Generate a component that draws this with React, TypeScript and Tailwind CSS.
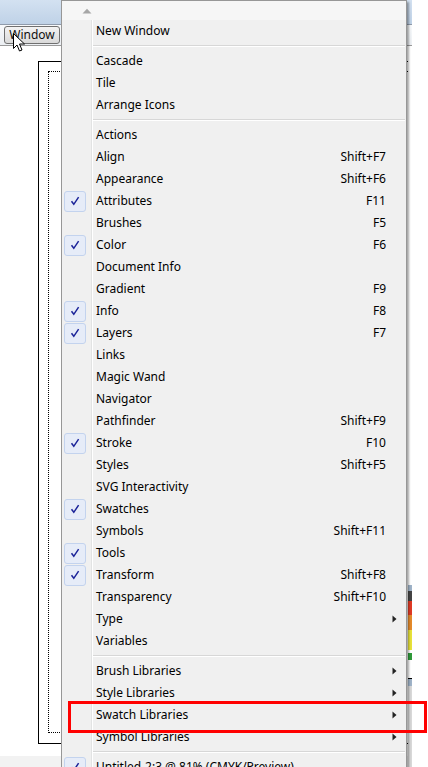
import React from "react";

type Item =
  | { sep: true }
  | { label: string; key?: string; checked?: boolean; sub?: boolean; sep?: false };

const items: Item[] = [
  { label: "New Window" },
  { sep: true },
  { label: "Cascade" },
  { label: "Tile" },
  { label: "Arrange Icons" },
  { sep: true },
  { label: "Actions" },
  { label: "Align", key: "Shift+F7" },
  { label: "Appearance", key: "Shift+F6" },
  { label: "Attributes", key: "F11", checked: true },
  { label: "Brushes", key: "F5" },
  { label: "Color", key: "F6", checked: true },
  { label: "Document Info" },
  { label: "Gradient", key: "F9" },
  { label: "Info", key: "F8", checked: true },
  { label: "Layers", key: "F7", checked: true },
  { label: "Links" },
  { label: "Magic Wand" },
  { label: "Navigator" },
  { label: "Pathfinder", key: "Shift+F9" },
  { label: "Stroke", key: "F10", checked: true },
  { label: "Styles", key: "Shift+F5" },
  { label: "SVG Interactivity" },
  { label: "Swatches", checked: true },
  { label: "Symbols", key: "Shift+F11" },
  { label: "Tools", checked: true },
  { label: "Transform", key: "Shift+F8", checked: true },
  { label: "Transparency", key: "Shift+F10" },
  { label: "Type", sub: true },
  { label: "Variables" },
  { sep: true },
  { label: "Brush Libraries", sub: true },
  { label: "Style Libraries", sub: true },
  { label: "Swatch Libraries", sub: true },
  { label: "Symbol Libraries", sub: true },
  { sep: true },
  { label: "Untitled-2:3 @ 81% (CMYK/Preview)", checked: true },
];

function Check() {
  return (
    <div className="w-[22px] h-[21px] rounded-[3px] border border-[#c3d3ee] bg-[#e6ecf8] flex items-center justify-center">
      <svg width="10" height="10" viewBox="0 0 10 10">
        <path d="M1.5 5.2 L3.8 8.3 L8.6 1.2" fill="none" stroke="#1c2499" strokeWidth="1.5" />
      </svg>
    </div>
  );
}

function Arrow() {
  return (
    <svg width="5" height="8" viewBox="0 0 5 8">
      <path d="M0.5 0.5 L4.5 4 L0.5 7.5 Z" fill="#222" />
    </svg>
  );
}

function Cursor() {
  return (
    <svg width="13" height="20" viewBox="0 0 13 20" className="absolute left-[13px] top-[33px]">
      <path
        d="M0.5 0.5 L0.5 15.5 L4 12 L6.5 18 L9 17 L6.5 11 L11.5 11 Z"
        fill="#fff"
        stroke="#000"
        strokeWidth="1"
        strokeLinejoin="round"
      />
    </svg>
  );
}

export default function App() {
  return (
    <div className="relative w-[428px] h-[767px] overflow-hidden bg-white font-['Noto_Sans',sans-serif] text-[12px] text-black">
      {/* application behind the menu */}
      <div className="w-[412px] h-full flex flex-col">
        <div className="h-[25px] bg-gradient-to-b from-[#d3e1f1] to-[#bfd2e7] border-b border-[#8f9bab]" />
        <div className="relative h-[21px] bg-gradient-to-b from-[#f7f9fb] to-[#eceff3] border-b border-[#9a9a9a] flex items-center pl-[4px]">
          <div className="h-[18px] w-[56px] rounded-[3px] border border-[#707070] bg-gradient-to-b from-[#f3f3f3] to-[#dadada] flex items-center justify-center leading-none text-[12px] text-[#101010]">
            Window
          </div>
        </div>
        <div className="flex-1 flex">
          <div className="flex-1 flex flex-col bg-white">
            <div className="pl-[38px] pt-[15px]">
              <div className="h-[683px] border border-black border-r-0 pl-[9px] pt-[9px]">
                <div className="h-[662px] border border-dotted border-black border-r-0" />
              </div>
            </div>
            <div className="flex-1 mt-[12px] bg-[#f2f2f2]" />
          </div>
          <div className="w-[4px] flex flex-col">
            <div className="h-[539px] bg-white" />
            <div className="h-[6px] bg-[#9fb3c8]" />
            <div className="h-[10px] bg-[#444]" />
            <div className="h-[14px] bg-[#e03a24]" />
            <div className="h-[15px] bg-[#e58a2a]" />
            <div className="h-[20px] bg-[#e8e23a]" />
            <div className="h-[3px] bg-white" />
            <div className="h-[7px] bg-[#2f9a3a]" />
            <div className="h-[18px] bg-white" />
            <div className="h-[1px] bg-black" />
            <div className="h-[7px] bg-[#9fb3c8]" />
            <div className="flex-1 bg-[#d8d8d8]" />
          </div>
        </div>
      </div>

      <Cursor />

      {/* dropdown menu */}
      <div className="absolute left-[61px] top-0 w-[346px] border border-[#979797] bg-[#f0f0f0] shadow-[2px_2px_2px_rgba(0,0,0,0.35)]">
        <div className="h-[19px] bg-[#f6f6f6] flex items-center pl-[20px]">
          <svg width="10" height="6" viewBox="0 0 10 6">
            <path d="M0.5 5.5 L5 0.8 L9.5 5.5 Z" fill="#a6a6a6" />
          </svg>
        </div>
        {items.map((it, i) =>
          it.sep ? (
            <div key={i} className="h-[8px] flex">
              <div className="w-[30px] shrink-0 border-r border-[#e2e3e3] relative">
                <div className="absolute right-[-2px] top-0 bottom-0 w-px bg-white" />
              </div>
              <div className="flex-1 pt-[3px] pl-[1px] pr-[1px]">
                <div className="border-t border-[#d7d7d7] border-b border-b-white" />
              </div>
            </div>
          ) : (
            <div key={i} className="h-[22px] flex items-center">
              <div className="w-[30px] h-full shrink-0 border-r border-[#e2e3e3] relative flex items-center pl-[2px]">
                <div className="absolute right-[-2px] top-0 bottom-0 w-px bg-white" />
                {it.checked ? <Check /> : null}
              </div>
              <div className="flex-1 pl-[4px] whitespace-nowrap leading-none">{it.label}</div>
              <div className="whitespace-nowrap leading-none">{it.key ?? ""}</div>
              <div className="w-[20px] shrink-0 flex items-center pl-[6px]">
                {it.sub ? <Arrow /> : null}
              </div>
            </div>
          )
        )}
      </div>

      {/* annotation */}
      <div className="absolute left-[68px] top-[701px] w-[359px] h-[32px] border-[3px] border-[#ff0000]" />
    </div>
  );
}
